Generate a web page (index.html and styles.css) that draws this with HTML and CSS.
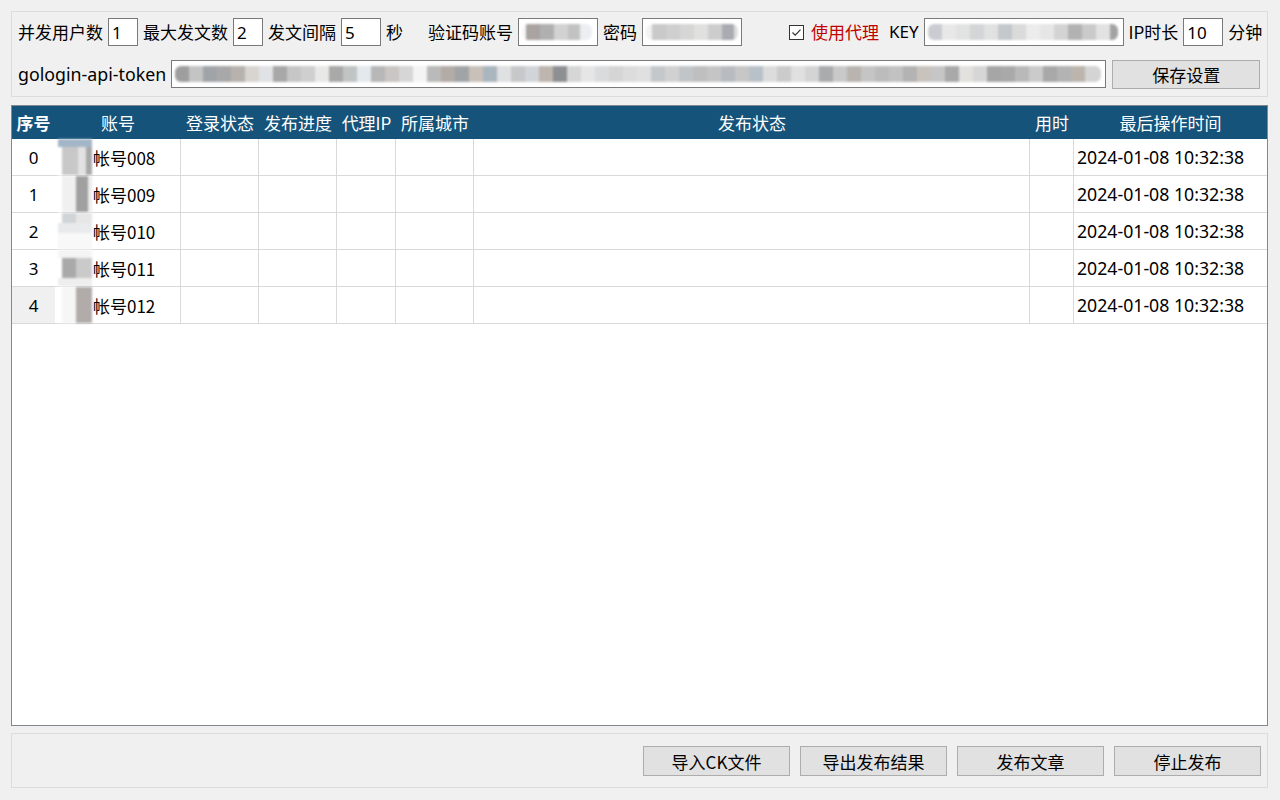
FILE: index.html
```html
<!DOCTYPE html>
<html lang="zh-CN">
<head>
<meta charset="utf-8">
<title>发布工具</title>
<link rel="stylesheet" href="styles.css">
</head>
<body>
<div class="app">
  <section class="panel settings">
    <div class="row">
      <span class="lbl">并发用户数</span><span class="field w30">1</span>
      <span class="lbl">最大发文数</span><span class="field w30">2</span>
      <span class="lbl">发文间隔</span><span class="field w40">5</span>
      <span class="lbl">秒</span>
      <span class="lbl gap-l">验证码账号</span><span class="field w80"><span class="mosaic m-acc"></span></span>
      <span class="lbl">密码</span><span class="field w100"><span class="mosaic m-pwd"></span></span>
      <span class="check"><svg viewBox="0 0 15 15" width="15" height="15"><rect x="0.5" y="0.5" width="14" height="14" fill="#fff" stroke="#333"/><path d="M3.5 7.5 L6.2 10.2 L11.5 4.6" fill="none" stroke="#333" stroke-width="1.2"/></svg></span>
      <span class="lbl red">使用代理</span>
      <span class="lbl key latin">KEY</span><span class="field w200"><span class="mosaic m-key"></span></span>
      <span class="lbl">IP时长</span><span class="field w40">10</span>
      <span class="lbl">分钟</span>
    </div>
    <div class="row">
      <span class="lbl latin token-lbl">gologin-api-token</span><span class="field wtoken"><span class="mosaic m-token"></span></span>
      <button class="btn save">保存设置</button>
    </div>
  </section>

  <section class="grid-wrap">
    <div class="grid head">
      <div class="hc bold">序号</div>
      <div class="hc">账号</div>
      <div class="hc">登录状态</div>
      <div class="hc">发布进度</div>
      <div class="hc">代理IP</div>
      <div class="hc">所属城市</div>
      <div class="hc">发布状态</div>
      <div class="hc">用时</div>
      <div class="hc">最后操作时间</div>
    </div>
    <div class="grid row-d">
      <div class="rh">0</div>
      <div class="c acc"><span class="av av0"></span>帐号008</div>
      <div class="c"></div><div class="c"></div><div class="c"></div><div class="c"></div><div class="c"></div><div class="c"></div>
      <div class="c t">2024-01-08 10:32:38</div>
    </div>
    <div class="grid row-d">
      <div class="rh">1</div>
      <div class="c acc"><span class="av av1"></span>帐号009</div>
      <div class="c"></div><div class="c"></div><div class="c"></div><div class="c"></div><div class="c"></div><div class="c"></div>
      <div class="c t">2024-01-08 10:32:38</div>
    </div>
    <div class="grid row-d">
      <div class="rh">2</div>
      <div class="c acc"><span class="av av2"></span>帐号010</div>
      <div class="c"></div><div class="c"></div><div class="c"></div><div class="c"></div><div class="c"></div><div class="c"></div>
      <div class="c t">2024-01-08 10:32:38</div>
    </div>
    <div class="grid row-d">
      <div class="rh">3</div>
      <div class="c acc"><span class="av av3"></span>帐号011</div>
      <div class="c"></div><div class="c"></div><div class="c"></div><div class="c"></div><div class="c"></div><div class="c"></div>
      <div class="c t">2024-01-08 10:32:38</div>
    </div>
    <div class="grid row-d">
      <div class="rh sel">4</div>
      <div class="c acc"><span class="av av4"></span>帐号012</div>
      <div class="c"></div><div class="c"></div><div class="c"></div><div class="c"></div><div class="c"></div><div class="c"></div>
      <div class="c t">2024-01-08 10:32:38</div>
    </div>
  </section>

  <section class="panel actions">
    <button class="btn act">导入CK文件</button>
    <button class="btn act">导出发布结果</button>
    <button class="btn act">发布文章</button>
    <button class="btn act">停止发布</button>
  </section>
</div>
</body>
</html>
```

FILE: styles.css
```css
html, body {
  margin: 0;
  padding: 0;
  background: #f0f0f0;
}
body {
  font-family: "Noto Sans CJK SC", "Noto Sans", sans-serif;
  font-size: 17px;
  color: #000;
  width: 1280px;
  height: 800px;
  overflow: hidden;
}
.app {
  padding: 11px 12px 0 11px;
  display: flex;
  flex-direction: column;
}
.panel {
  border: 1px solid #dcdcdc;
  box-sizing: border-box;
}
.settings {
  height: 86px;
  padding: 6px 6px 0 6px;
  display: flex;
  flex-direction: column;
  gap: 14px;
}
.row {
  display: flex;
  align-items: center;
  height: 28px;
}
.row > * { flex-shrink: 0; }
.lbl {
  white-space: nowrap;
  line-height: 28px;
  margin-right: 5px;
}
.field + .lbl { margin-left: 5px; }
.gap-l { margin-left: 20px !important; }
.red { color: #c00000; }
.key { margin-left: 5px; }
.latin { font-family: "Noto Sans", "Noto Sans CJK SC", sans-serif; }
.token-lbl { font-size: 17.8px; }
.field {
  height: 28px;
  box-sizing: border-box;
  border: 1px solid #7a7a7a;
  background: #fff;
  display: flex;
  align-items: center;
  padding-left: 3px;
  overflow: hidden;
  font-family: "Noto Sans", "Noto Sans CJK SC", sans-serif;
}
.w30 { width: 30px; }
.w40 { width: 40px; }
.w80 { width: 80px; }
.w100 { width: 100px; }
.w200 { width: 200px; }
.wtoken { width: 935px; }
.check {
  display: flex;
  margin-left: 47px;
  margin-right: 7px;
}
.check svg { display: block; }

.mosaic {
  display: block;
  height: 16px;
  filter: blur(1.2px);
  border-radius: 6px;
}
.m-acc {
  width: 70px;
  background: linear-gradient(90deg, #f7f7f7 0 4px, #a9a3a2 4px 18px, #b0b0b0 18px 32px, #d2d2d2 32px 46px, #c2c2c2 46px 58px, #eceef2 58px 70px);
}
.m-pwd {
  width: 92px;
  background: linear-gradient(90deg, #f2f2f2 0 6px, #c9c9c9 6px 20px, #cfcfcf 20px 34px, #d6d6d6 34px 48px, #e0e0de 48px 62px, #cdcdcd 62px 76px, #a9abb0 76px 88px, #dedede 88px 92px);
}
.m-key {
  width: 190px;
  background: linear-gradient(90deg, #c9ccd1 0 14px, #e8e8e8 14px 28px, #e2e2e2 28px 42px, #d3d5d6 42px 56px, #e1e1e1 56px 70px, #c3c8cd 70px 84px, #dadada 84px 98px, #ececec 98px 112px, #e6e6e6 112px 126px, #d3d3d3 126px 140px, #b2b2b2 140px 154px, #cacaca 154px 168px, #e2e2e2 168px 182px, #a3a3a3 182px 190px);
}
.m-token {
  width: 926px;
  background: linear-gradient(90deg,
    #9e9e9e 0 14px, #c4c4c4 14px 28px, #a0a4a8 28px 42px, #a8a8a8 42px 56px, #b8b2ae 56px 70px, #d8d5d1 70px 84px,
    #e0e2e5 84px 98px, #a8a8a8 98px 112px, #c6c6c6 112px 126px, #cfcfcf 126px 140px, #e8e8e6 140px 154px, #a9a9a9 154px 168px,
    #c0c4c2 168px 182px, #e4e9ed 182px 196px, #b7b7b7 196px 210px, #c9c6c3 210px 224px, #d6d6d6 224px 238px, #f4f4f4 238px 252px,
    #bababa 252px 266px, #b3aba6 266px 280px, #a1a4a6 280px 294px, #c8c1b9 294px 308px, #aab6be 308px 322px, #dfe0e2 322px 336px,
    #c7c8ca 336px 350px, #d1d5d9 350px 364px, #bdb5ae 364px 378px, #8d8f92 378px 392px, #d6d6d6 392px 406px, #e6e6e6 406px 420px,
    #d9dbdd 420px 434px, #d5d5d5 434px 448px, #dcdcdc 448px 462px, #e0e0e0 462px 476px, #c5c8cb 476px 490px, #d1d1d1 490px 504px,
    #c2c5c8 504px 518px, #bfbfbf 518px 532px, #c5c5c5 532px 546px, #b8bcc1 546px 560px, #c7c7c7 560px 574px, #b9c1c8 574px 588px,
    #dcdcdc 588px 602px, #cbcbcb 602px 616px, #e0e0e0 616px 630px, #d4d4d4 630px 644px, #a9abad 644px 658px, #c9c9c9 658px 672px,
    #b9b4b0 672px 686px, #c5c5c5 686px 700px, #bcbcbc 700px 714px, #c2c2c2 714px 728px, #b3b3b3 728px 742px, #c9c3bd 742px 756px,
    #c6c6c6 756px 770px, #a9a9a9 770px 784px, #e3e1de 784px 798px, #d6d6d6 798px 812px, #a6a6a6 812px 826px, #a9a9a9 826px 840px,
    #b9b9b9 840px 854px, #cbcbcb 854px 868px, #a8a8a8 868px 882px, #b3b3b3 882px 896px, #bcb5ae 896px 910px, #d4d4d4 910px 926px);
}

.btn {
  font-family: "Noto Sans CJK SC", "Noto Sans", sans-serif;
  font-size: 17px;
  background: #e1e1e1;
  border: 1px solid #adadad;
  color: #000;
  padding: 0;
  margin: 0;
  box-sizing: border-box;
  line-height: 1;
}
.save {
  width: 148px;
  height: 29px;
  margin-left: 6px;
}

.grid-wrap {
  margin-top: 8px;
  height: 621px;
  box-sizing: border-box;
  border: 1px solid #828790;
  background: #fff;
}
.grid {
  display: grid;
  grid-template-columns: 43px 126px 78px 78px 59px 78px 556px 44px 193px;
}
.head {
  height: 33px;
  background: #15537a;
  color: #fff;
}
.hc {
  display: flex;
  align-items: center;
  justify-content: center;
  white-space: nowrap;
  line-height: 1;
}
.bold { font-weight: bold; }
.row-d {
  height: 37px;
  box-sizing: border-box;
  border-bottom: 1px solid #d9d9d9;
}
.rh {
  display: flex;
  align-items: center;
  justify-content: center;
  font-family: "Noto Sans", sans-serif;
}
.rh.sel { background: #f0f0f0; }
.c {
  box-sizing: border-box;
  border-right: 1px solid #d9d9d9;
  display: flex;
  align-items: center;
  white-space: nowrap;
}
.acc { padding-left: 3px; }
.t {
  padding-left: 3px;
  border-right: none;
  font-family: "Noto Sans", sans-serif;
  font-size: 17.7px;
}
.av {
  display: block;
  width: 34px;
  height: 36px;
  margin-right: 1px;
  filter: blur(0.8px);
}
.av0 { background: linear-gradient(180deg, #a3b6c7 0 8px, transparent 8px), linear-gradient(90deg, #fff 0 4px, #c8c8c8 4px 20px, #e2e2e2 20px 28px, #a8a8a8 28px 34px); }
.av1 { background: linear-gradient(90deg, #fff 0 4px, #f0f0f0 4px 18px, #a0a0a0 18px 30px, #ececec 30px 34px); }
.av2 { background: linear-gradient(180deg, transparent 0 10px, #e8eaec 10px 20px, #f8f8f8 20px 36px), linear-gradient(90deg, #fff 0 4px, #d0d4d7 4px 18px, #e6e6e6 18px 34px); }
.av3 { background: linear-gradient(180deg, #f4f4f4 0 8px, transparent 8px 28px, #eeeeee 28px 36px), linear-gradient(90deg, #fff 0 4px, #a9a9a9 4px 18px, #cacaca 18px 34px); }
.av4 { background: linear-gradient(90deg, #fff 0 4px, #f6f6f6 4px 18px, #b1acaa 18px 34px); }

.actions {
  margin-top: 7px;
  height: 55px;
  display: flex;
  justify-content: flex-end;
  align-items: flex-start;
  padding: 12px 6px 0 0;
  gap: 10px;
}
.act {
  width: 147px;
  height: 30px;
}
```
